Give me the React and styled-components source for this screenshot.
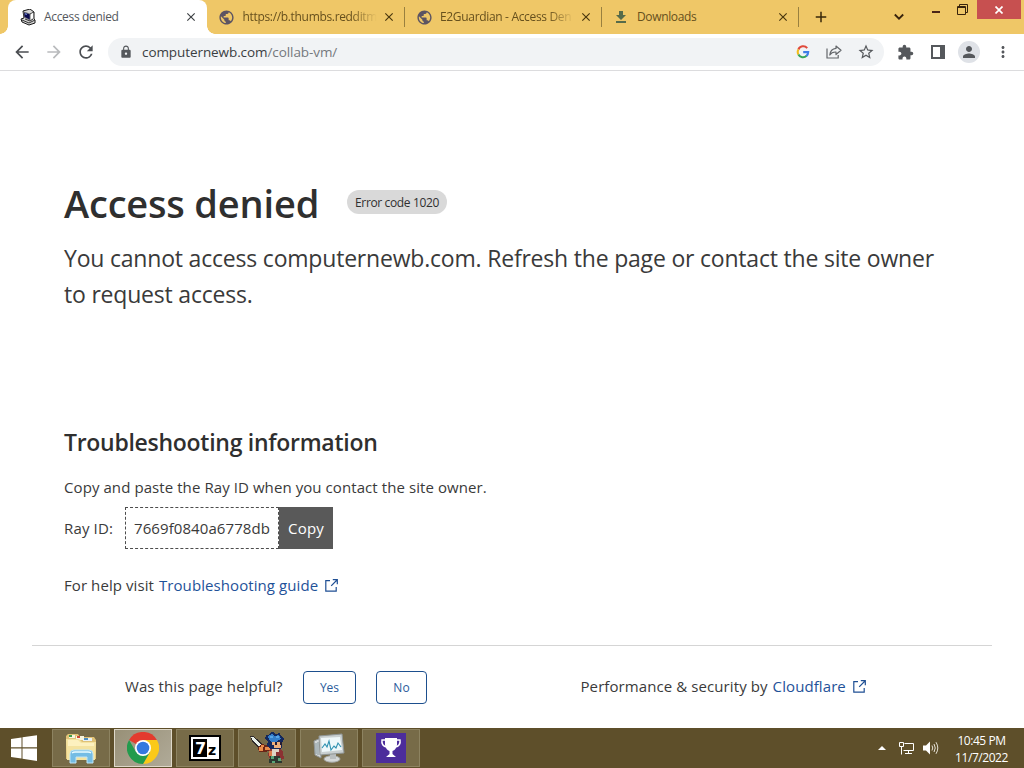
import React from "react";
import styled, { createGlobalStyle } from "styled-components";
import {
  MdAdd, MdArrowBack, MdArrowForward, MdClose, MdExtension, MdLock,
  MdMoreVert, MdPerson, MdPublic, MdRefresh, MdStarBorder,
} from "react-icons/md";

const Global = createGlobalStyle`
  * { box-sizing: border-box; }
  html, body { margin: 0; padding: 0; overflow: hidden; background: #fff; }
  body { font-family: "Open Sans", "Noto Sans", sans-serif; color: #3a3a3a; }
  svg { display: block; flex: none; }
`;

const Screen = styled.div`
  width: 1024px; height: 768px; display: flex; flex-direction: column; overflow: hidden;
`;

/* Browser chrome */
const TabStrip = styled.div`
  height: 34px; flex: none; display: flex; background: #efc767; padding-left: 8px; color: #66501d;
`;
const Tab = styled.div`
  position: relative; width: ${(p) => p.$w || 197.5}px; height: 34px; display: flex; align-items: center;
  padding: 0 8px 0 ${(p) => (p.$active ? 12 : 11.5)}px; font-size: 12px;
  ${(p) => p.$active && `
    background: #fff; color: #54585d; border-radius: 8px 8px 0 0;
    &::before, &::after { content: ""; position: absolute; bottom: 0; width: 8px; height: 8px; }
    &::before { left: -8px; background: radial-gradient(circle at 0 0, transparent 7.5px, #fff 8px); }
    &::after { right: -8px; background: radial-gradient(circle at 100% 0, transparent 7.5px, #fff 8px); }
  `}
`;
const TabIcon = styled.span`
  width: 16px; height: 16px; margin-right: 8px; display: flex; align-items: center; justify-content: center; flex: none;
`;
const TabTitle = styled.span`
  width: 134px; flex: none; white-space: nowrap; line-height: 20px;
  letter-spacing: ${(p) => p.$ls || 0}px;
  ${(p) => p.$fade && "mask-image: linear-gradient(to right, #000 108px, transparent 134px);"}
`;
const TabClose = styled.span`
  margin-left: ${(p) => (p.$active ? 6 : 5)}px; color: ${(p) => (p.$active ? "#3c4043" : "#49370e")}; display: flex;
`;
const Divider = styled.span`
  width: 1px; height: 20px; margin-top: 7px; background: #99803f; margin-left: -1px;
`;
const NewTab = styled.span`
  display: flex; align-items: center; margin-left: 13px; color: #38290a;
`;
const WindowButtons = styled.div`
  margin-left: auto; display: flex; align-items: flex-start; color: #38230c;
`;
const SearchTabs = styled.span`display: flex; height: 34px; align-items: center; margin-right: 27px;`;
const Minimize = styled.span`width: 8px; height: 2px; background: #4a2417; margin: 11px 17px 0 0;`;
const Restore = styled.span`margin: 4px 9px 0 0;`;
const CloseWindow = styled.span`
  width: 44px; height: 19px; background: #c75050; color: #fff; display: flex;
  align-items: center; justify-content: center; margin-right: 3px;
`;
const Toolbar = styled.div`
  height: 37px; flex: none; display: flex; align-items: center; background: #fff; border-bottom: 1px solid #dcdcde;
  color: #54575b; padding-left: 12px;
`;
const NavButton = styled.span`display: flex; width: 20px; margin-right: 12px; color: ${(p) => p.$c || "#4b4e52"};`;
const Omnibox = styled.div`
  width: 776px; height: 28px; border-radius: 14px; background: #f1f3f5; display: flex; align-items: center;
  padding: 0 9px 0 11px; font-size: 13.5px; color: #3a3e42;
`;
const Address = styled.span`
  margin-left: 9px; flex: 1; line-height: 20px; letter-spacing: -0.08px; white-space: nowrap;
`;
const Path = styled.span`color: #74787d;`;
const BarIcons = styled.div`display: flex; align-items: center; gap: 15.5px; color: #55585c;`;
const Actions = styled(BarIcons)`gap: 13.5px; padding-left: 13px;`;
const Extensions = styled.span`display: flex; margin-right: 3px;`;
const Avatar = styled.span`
  width: 22px; height: 22px; border-radius: 50%; background: #dfe2e7; display: flex; align-items: center; justify-content: center;
`;

/* Error page */
const Page = styled.main`
  height: 657px; flex: none; background: #fff; padding: 108px 32px 0; display: flex; flex-direction: column;
`;
const TitleRow = styled.div`display: flex; height: 48px; align-items: center; padding-left: 32px;`;
const Title = styled.h1`
  margin: 0; width: 283px; font-size: 38px; line-height: 48px; font-weight: 600; letter-spacing: -0.18px;
  white-space: nowrap; color: #2f2f2f;
`;
const CodeBadge = styled.span`
  width: 100px; height: 24px; margin-top: -2px; border-radius: 12px; background: #d9d9d9; text-align: center;
  font-size: 12px; line-height: 25px; font-weight: 500; letter-spacing: -0.36px; white-space: nowrap; color: #303030;
`;
const Lead = styled.p`
  margin: 13px 0 0; padding-left: 32px; font-size: 23px; line-height: 36px; letter-spacing: -0.2px; white-space: nowrap;
`;
const Heading = styled.h2`
  margin: 115px 0 0; padding-left: 32px; font-size: 23px; line-height: 31px; font-weight: 600; letter-spacing: -0.28px;
  color: #2f2f2f;
`;
const BodyLine = styled.p`
  margin: ${(p) => p.$top}px 0 0; padding-left: 32px; height: 24px; font-size: 15px; line-height: 24px;
  letter-spacing: 0.08px; white-space: nowrap; display: flex; align-items: center;
`;
const RayRow = styled.div`
  display: flex; height: 42px; margin-top: 8px; padding-left: 32px; align-items: center; font-size: 15px;
`;
const RayLabel = styled.span`width: 61px; letter-spacing: 0.15px;`;
const RayValue = styled.span`
  width: 154px; height: 42px; border: 1px dashed #4d4d4d; line-height: 41px; text-align: center; letter-spacing: 0.08px;
`;
const CopyButton = styled.button`
  width: 54px; height: 42px; padding: 0; border: 0; background: #595959; color: #fff; font: 400 15px "Open Sans", sans-serif;
  line-height: 42px; letter-spacing: 0.15px;
`;
const Link = styled.a`
  color: #1f5299; margin-left: 5px; display: flex; align-items: center; gap: 7px;
`;
const Footer = styled.footer`
  margin-top: 48px; border-top: 1px solid #d5d5d5; padding: 25px 0 0 93px; display: flex; font-size: 15px; height: 82px;
`;
const FooterText = styled.span`
  line-height: 31px; height: 31px; width: ${(p) => p.$w || "auto"}; letter-spacing: 0.09px; white-space: nowrap; display: flex;
`;
const Answer = styled.button`
  width: ${(p) => p.$w}px; height: 33px; margin-right: 20px; border: 1px solid #1d4f8e; border-radius: 4px; background: #fff;
  color: #2b5b9b; font: 400 12px "Open Sans", sans-serif; padding: 0;
`;
const Credit = styled.div`margin-left: 133.5px; display: flex;`;

/* Desktop task bar */
const Taskbar = styled.div`
  height: 40px; flex: none; background: #5e4f2a; display: flex; align-items: center; color: #fff;
`;
const Start = styled.span`width: 52px; padding-left: 11px;`;
const TaskButton = styled.span`
  width: 58px; height: 38px; margin-right: 4px; display: flex; align-items: center; justify-content: center;
  border: 1px solid ${(p) => (p.$active ? "#ded8c9" : "#8d8361")};
  background: ${(p) => (p.$active ? "linear-gradient(135deg, #989077, #b0aa98)" : "#776b48")};
`;
const Tray = styled.div`margin-left: auto; display: flex; align-items: center; gap: 9px;`;
const TrayArrow = styled.span`margin-right: 4px;`;
const Clock = styled.div`
  width: 76px; text-align: center; font-size: 12px; line-height: 17px; letter-spacing: -0.45px; padding: 1px 9px 0 0;
  white-space: nowrap;
`;

const External = () => (
  <svg width="13" height="13" viewBox="0 0 13 13" fill="none" stroke="#1f4f94" strokeWidth="1.2">
    <path d="M5 1.6H.8V12.2H11.2V8M7.8 .7H12.3V5.2M12 1L6.2 6.8" />
  </svg>
);

const GoogleIcon = () => (
  <svg width="14" height="14" viewBox="0 0 14 14" fill="none" strokeWidth="2.1">
    <path d="M11.2 3.1A5.2 5.2 0 0 0 2.4 4.5" stroke="#e04a3c" />
    <path d="M2.4 4.5A5.2 5.2 0 0 0 2.4 9.5" stroke="#f3bd1d" />
    <path d="M2.4 9.5A5.2 5.2 0 0 0 10.6 10.8" stroke="#36a558" />
    <path d="M10.4 11A5.2 5.2 0 0 0 12.2 7.1H7.2" stroke="#3e7de8" />
  </svg>
);

const CollabIcon = () => (
  <svg width="16" height="17" viewBox="0 0 16 17">
    <path d="M3 2L10 0L14 3V10L15 11V14L9 16L2 13L1 10L4 9Z" fill="#d5d5d5" stroke="#181818" />
    <path d="M4 3L10 5V11L4 8Z" fill="#08084e" stroke="#777" strokeWidth=".7" />
    <path d="M5 4L7 4.8V6L5 5.5Z" fill="#6c83cc" />
    <path d="M10 5L14 3M2 11L9 14L15 11M5 10L10 12L13 10" fill="none" stroke="#333" />
    <path d="M11 5L13 4V9L11 10Z" fill="#fff" />
  </svg>
);

const DownloadIcon = () => (
  <svg width="12" height="14" viewBox="0 0 12 14" fill="#566b4a">
    <path d="M4 1H8V5H11L6 10L1 5H4ZM1 11H11V13H1Z" />
  </svg>
);

const ShareIcon = () => (
  <svg width="16" height="16" viewBox="0 0 16 16" fill="none" stroke="#63666a" strokeWidth="1.2">
    <path d="M1 4.5V14H12.2V11" />
    <path d="M10 2L15 6.3L10 10.5V8C6.8 7.8 5 9 3.8 11C4.2 7.3 6.3 4.7 10 4.4Z" strokeLinejoin="round" />
  </svg>
);

const ExplorerIcon = () => (
  <svg width="34" height="32" viewBox="0 0 34 32">
    <path d="M2 4L4 2H14L16 5H30L32 8V27H2Z" fill="#e0c277" />
    <path d="M5 3H11V6H5Z" fill="#f7f5df" /><path d="M5 3H8V5H5Z" fill="#3f9b4c" />
    <path d="M12 4H20V8H12Z" fill="#f7f5df" /><path d="M13 4H16V6H13Z" fill="#cf4a35" />
    <path d="M19 6H28V9H19Z" fill="#e9f2f5" /><path d="M20 6H24V8H20Z" fill="#4c8dc0" />
    <path d="M2 7H15L18 10H32L31 28H3Z" fill="#f4e3a0" />
    <path d="M4 8H14L17 11H30V14H4Z" fill="#fdf1bf" />
    <path d="M6 31V22Q6 18 10 18H25Q29 18 29 22V31H23V25H12V31Z" fill="#74bce4" stroke="#bfe5f7" />
    <path d="M8 21Q9 20 11 20H24Q26 20 27 21" fill="none" stroke="#e9fbff" strokeWidth="1.4" />
  </svg>
);

const ChromeIcon = () => (
  <svg width="32" height="32" viewBox="0 0 32 32">
    <path d="M16 16L2.1 8A16 16 0 0 1 29.9 8Z" fill="#e33b2e" />
    <path d="M16 8H29.9A16 16 0 0 1 16 32L23 20Z" fill="#fbc918" />
    <path d="M2.1 8A16 16 0 0 0 16 32L23 20L16 16L9 20Z" fill="#239b4d" />
    <circle cx="16" cy="16" r="8" fill="#fff" /><circle cx="16" cy="16" r="6.3" fill="#3478df" />
  </svg>
);

const ZipIcon = () => (
  <svg width="32" height="26" viewBox="0 0 32 26">
    <rect width="32" height="26" fill="#000" /><rect x="2" y="2" width="28" height="22" fill="#fff" />
    <rect x="4" y="4" width="14" height="18" fill="#000" />
    <text x="6" y="18.5" fontFamily="DejaVu Sans" fontSize="16" fontWeight="700" fill="#fff">7</text>
    <text x="19" y="20" fontFamily="DejaVu Sans" fontSize="14" fontWeight="700" fill="#000">z</text>
  </svg>
);

const HeroIcon = () => (
  <svg width="34" height="32" viewBox="0 0 34 32" shapeRendering="crispEdges">
    <path d="M0 4H3L12 11L14 16L10 18L3 11Z" fill="#302b2c" /><path d="M1 5H3L12 13L11 16L4 10Z" fill="#e8eee8" />
    <path d="M8 15L12 12L18 14L23 13V18L15 20L9 20Z" fill="#6b2516" />
    <path d="M9 15H13V19H9ZM11 13H14V15H11ZM15 15H21V18H15Z" fill="#e98b4a" />
    <path d="M16 3L19 3L21 0H24L25 2L30 1L31 4L34 7L32 11V16L29 18H21L17 13L18 9L15 7Z" fill="#14285c" />
    <path d="M18 4L22 2L24 4L29 3L31 7L28 8L25 12L21 10L19 8Z" fill="#347eca" />
    <path d="M20 4H23V6H20ZM26 4H29V6H26Z" fill="#58a4e4" />
    <path d="M22 10H31V16H24V13H22Z" fill="#efb07c" /><path d="M25 10H27V13H25ZM30 10H32V13H30Z" fill="#241c35" />
    <path d="M20 17H30L33 20L34 27L30 28H21L18 23Z" fill="#8b3232" />
    <path d="M22 17H29V20H26V25H22Z" fill="#ddd4c4" /><path d="M19 19H22V24H19Z" fill="#db7c48" />
    <path d="M20 24H30L32 31H19Z" fill="#2c3830" /><path d="M21 24H24V27H21ZM22 29H25V31H22ZM28 26H31V29H28Z" fill="#57a677" />
  </svg>
);

const MonitorIcon = () => (
  <svg width="32" height="30" viewBox="0 0 32 30">
    <path d="M1 8L8 5V25L2 22Z" fill="#d3d7d8" stroke="#8e9393" /><path d="M3 10V21M5 9V22" stroke="#85979d" />
    <ellipse cx="19" cy="26" rx="8" ry="3.2" fill="#d5d8d8" stroke="#a4a8a7" /><path d="M17 20H23V26H17Z" fill="#b9bebf" />
    <path d="M6 3L29 1L31 20L7 22Z" fill="#c9d0d1" stroke="#8f9595" /><path d="M8 5L27 4L29 17L9 19Z" fill="#eff8fa" />
    <path d="M9 15L12 11L14 14L16 8L18 17L21 13L23 15L25 10L28 14" fill="none" stroke="#2f91b0" strokeWidth="1.1" />
  </svg>
);

const TrophyIcon = () => (
  <svg width="30" height="30" viewBox="0 0 30 30">
    <rect width="30" height="30" fill="#4c2d9b" />
    <path d="M9 5H21V12Q20 17 16.5 18V21L20 24H10L13.5 21V18Q10 17 9 12Z" fill="#fff" />
    <path d="M9 7H6Q5 13 11 14M21 7H24Q25 13 19 14" fill="none" stroke="#fff" strokeWidth="1.5" />
  </svg>
);

const ChevronIcon = () => (
  <svg width="12" height="8" viewBox="0 0 12 8" fill="none" stroke="currentColor" strokeWidth="1.8"><path d="M1.8 1.5L6 5.7L10.2 1.5" /></svg>
);
const RestoreIcon = () => (
  <svg width="11" height="11" viewBox="0 0 11 11" fill="none" stroke="currentColor"><path d="M2.5 2V.5H10.5V8.5H8.5M.5 2.5H8.5V10.5H.5ZM.5 3.5H8.5" /></svg>
);
const WindowCloseIcon = () => (
  <svg width="8" height="8" viewBox="0 0 8 8" stroke="#fff" strokeWidth="1.7"><path d="M.5 .5L7.5 7.5M7.5 .5L.5 7.5" /></svg>
);
const PanelIcon = () => (
  <svg width="14" height="14" viewBox="0 0 14 14"><path d="M1 1H13V13H1Z" fill="none" stroke="currentColor" strokeWidth="2" /><path d="M9 1H13V13H9Z" fill="currentColor" /></svg>
);
const WindowsIcon = () => (
  <svg width="26" height="26" viewBox="0 0 26 26" fill="#fff"><path d="M0 4L10.5 2.5V12.3H0ZM11.5 2.3L26 .3V12.3H11.5ZM0 13.5H10.5V23.5L0 22ZM11.5 13.5H26V26L11.5 23.8Z" /></svg>
);
const NetworkIcon = () => (
  <svg width="15" height="14" viewBox="0 0 15 14" fill="none" stroke="#fff"><path d="M5.5 2.5H14.5V9.5H4.5M9.5 10V12.5M6 12.5H13M.5 1.5H4.5V5.5H.5ZM2.5 5.5V13.5" /></svg>
);
const VolumeIcon = () => (
  <svg width="16" height="14" viewBox="0 0 16 14"><path d="M0 4.5H3L7 .5V13.5L3 9.5H0Z" fill="#fff" /><path d="M9 4.5Q10.5 7 9 9.5M11 3Q13.5 7 11 11M13 1.2Q16.6 7 13 12.8" stroke="#e6e1d5" fill="none" /></svg>
);
const UpArrow = () => (
  <svg width="8" height="4" viewBox="0 0 8 4" fill="#fff"><path d="M0 4L4 0L8 4Z" /></svg>
);

const tabs = [
  { title: "https://b.thumbs.redditm", globe: true, fade: true, ls: -0.33 },
  { title: "E2Guardian - Access Den", globe: true, fade: true, ls: -0.33 },
  { title: "Downloads", ls: -0.36 },
];

export default function App() {
  return (
    <Screen>
      <Global />
      <TabStrip>
        <Tab $active $w={199}>
          <TabIcon><CollabIcon /></TabIcon>
          <TabTitle $ls={-0.33}>Access denied</TabTitle>
          <TabClose $active><MdClose size={14} /></TabClose>
        </Tab>
        {tabs.map((t, i) => (
          <React.Fragment key={t.title}>
            <Tab $w={i === 0 ? 197.5 : 197}>
              <TabIcon>{t.globe ? <MdPublic size={17} color="#5c5462" /> : <DownloadIcon />}</TabIcon>
              <TabTitle $fade={t.fade} $ls={t.ls}>{t.title}</TabTitle>
              <TabClose><MdClose size={14} /></TabClose>
            </Tab>
            <Divider />
          </React.Fragment>
        ))}
        <NewTab><MdAdd size={18} /></NewTab>
        <WindowButtons>
          <SearchTabs><ChevronIcon /></SearchTabs>
          <Minimize />
          <Restore><RestoreIcon /></Restore>
          <CloseWindow><WindowCloseIcon /></CloseWindow>
        </WindowButtons>
      </TabStrip>
      <Toolbar>
        <NavButton><MdArrowBack size={20} /></NavButton>
        <NavButton $c="#b9bbbd"><MdArrowForward size={20} /></NavButton>
        <NavButton><MdRefresh size={20} /></NavButton>
        <Omnibox>
          <MdLock size={14} color="#55585c" />
          <Address>computernewb.com<Path>/collab-vm/</Path></Address>
          <BarIcons>
            <GoogleIcon />
            <ShareIcon />
            <MdStarBorder size={18} />
          </BarIcons>
        </Omnibox>
        <Actions>
          <Extensions><MdExtension size={17} /></Extensions>
          <PanelIcon />
          <Avatar><MdPerson size={18} /></Avatar>
          <MdMoreVert size={18} />
        </Actions>
      </Toolbar>
      <Page>
        <TitleRow>
          <Title>Access denied</Title>
          <CodeBadge>Error code 1020</CodeBadge>
        </TitleRow>
        <Lead>You cannot access computernewb.com. Refresh the page or contact the site owner<br />to request access.</Lead>
        <Heading>Troubleshooting information</Heading>
        <BodyLine $top={17}>Copy and paste the Ray ID when you contact the site owner.</BodyLine>
        <RayRow>
          <RayLabel>Ray ID:</RayLabel>
          <RayValue>7669f0840a6778db</RayValue>
          <CopyButton>Copy</CopyButton>
        </RayRow>
        <BodyLine $top={24}>For help visit <Link>Troubleshooting guide <External /></Link></BodyLine>
        <Footer>
          <FooterText $w="178px">Was this page helpful?</FooterText>
          <Answer $w={53}>Yes</Answer>
          <Answer $w={51}>No</Answer>
          <Credit>
            <FooterText>Performance &amp; security by <Link>Cloudflare <External /></Link></FooterText>
          </Credit>
        </Footer>
      </Page>
      <Taskbar>
        <Start><WindowsIcon /></Start>
        <TaskButton><ExplorerIcon /></TaskButton>
        <TaskButton $active><ChromeIcon /></TaskButton>
        <TaskButton><ZipIcon /></TaskButton>
        <TaskButton><HeroIcon /></TaskButton>
        <TaskButton><MonitorIcon /></TaskButton>
        <TaskButton><TrophyIcon /></TaskButton>
        <Tray>
          <TrayArrow><UpArrow /></TrayArrow>
          <NetworkIcon />
          <VolumeIcon />
          <Clock>10:45 PM<br />11/7/2022</Clock>
        </Tray>
      </Taskbar>
    </Screen>
  );
}
